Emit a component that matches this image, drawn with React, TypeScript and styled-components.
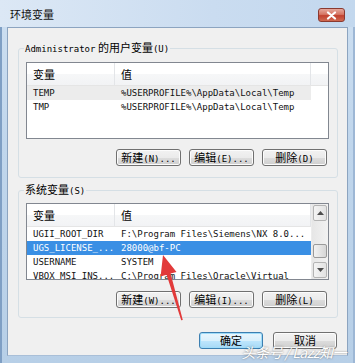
import styled, { createGlobalStyle } from "styled-components";

const GlobalStyle = createGlobalStyle`
  html, body {
    margin: 0;
    padding: 0;
    background: #fff;
  }
  body {
    font-family: "Noto Sans CJK SC", "Noto Sans", sans-serif;
    font-size: 11px;
    color: #000;
  }
`;

interface Variable {
  name: string;
  value: string;
  selected?: boolean;
  inactive?: boolean;
}

const userVars: Variable[] = [
  { name: "TEMP", value: "%USERPROFILE%\\AppData\\Local\\Temp", inactive: true },
  { name: "TMP", value: "%USERPROFILE%\\AppData\\Local\\Temp" },
];

const systemVars: Variable[] = [
  { name: "UGII_ROOT_DIR", value: "F:\\Program Files\\Siemens\\NX 8.0..." },
  { name: "UGS_LICENSE_...", value: "28000@bf-PC", selected: true },
  { name: "USERNAME", value: "SYSTEM" },
  { name: "VBOX_MSI_INS...", value: "C:\\Program Files\\Oracle\\Virtual" },
];

export default function App() {
  return <>
    <GlobalStyle />
    <Window>
      <TitleBar>
        <Title>环境变量</Title>
        <CloseButton aria-label="close">
          <svg width="11" height="9" viewBox="0 0 11 9">
            <path d="M2 1.5 L9 7.5 M9 1.5 L2 7.5" stroke="#fff" strokeWidth="2.2" strokeLinecap="round" />
          </svg>
        </CloseButton>
      </TitleBar>
      <Client>
        <Group>
          <Legend><Latin>Administrator</Latin> 的用户变量<Latin>(U)</Latin></Legend>
          <VarList vars={userVars} />
          <ButtonRow>
            <Button>新建<Latin>(N)...</Latin></Button>
            <Button>编辑<Latin>(E)...</Latin></Button>
            <Button>删除<Latin>(D)</Latin></Button>
          </ButtonRow>
        </Group>
        <Group $second>
          <Legend>系统变量<Latin>(S)</Latin></Legend>
          <VarList vars={systemVars} scroll />
          <ButtonRow $gap={11}>
            <Button>新建<Latin>(W)...</Latin></Button>
            <Button>编辑<Latin>(I)...</Latin></Button>
            <Button>删除<Latin>(L)</Latin></Button>
          </ButtonRow>
        </Group>
        <DialogButtons>
          <Button $default>确定</Button>
          <Button>取消</Button>
        </DialogButtons>
      </Client>
      <Annotation width="355" height="363" viewBox="0 0 355 363">
        <polygon
          points="163,255 176.5,272 170.6,273.6 182.8,320 181.2,320.3 166.6,274.8 160.6,276.5"
          fill="#e23a3a"
        />
      </Annotation>
      <Watermark>头条号 / Lazz知一</Watermark>
    </Window>
  </>;
}

interface VarListProps {
  vars: Variable[];
  scroll?: boolean;
}
function VarList(props: VarListProps) {
  return <ListBox>
    <ListBody>
      <Header>
        <HeaderCell>变量</HeaderCell>
        <HeaderCell>值</HeaderCell>
        <HeaderFill />
      </Header>
      {props.vars.map(v =>
        <Row key={v.name} $selected={v.selected} $inactive={v.inactive}>
          <Cell>{v.name}</Cell>
          <Cell>{v.value}</Cell>
        </Row>
      )}
    </ListBody>
    {props.scroll && <ScrollBar>
      <ScrollArrow>
        <svg width="7" height="4" viewBox="0 0 7 4"><path d="M0 4 L3.5 0 L7 4 Z" fill="#4d4d4d" /></svg>
      </ScrollArrow>
      <Track>
        <Thumb style={{ marginTop: 22 }} />
      </Track>
      <ScrollArrow>
        <svg width="7" height="4" viewBox="0 0 7 4"><path d="M0 0 L7 0 L3.5 4 Z" fill="#4d4d4d" /></svg>
      </ScrollArrow>
    </ScrollBar>}
  </ListBox>;
}

const Window = styled.div`
  position: relative;
  width: 355px;
  height: 363px;
  overflow: hidden;
  background: linear-gradient(to bottom, #cddff1 0%, #c0d6ec 40%, #b7cfe7 100%);
  box-shadow: inset 2px 0 0 #7f9fc4, inset -2px 0 0 #9db7d5;
  display: flex;
  flex-direction: column;
`;

const TitleBar = styled.div`
  height: 27px;
  display: flex;
  align-items: center;
  justify-content: space-between;
  padding: 0 10px;
  background: linear-gradient(to right, #dce8f5 0%, #cadcf0 60%, #c3d8ee 100%);
`;

const Title = styled.div`
  font-size: 11px;
  line-height: 14px;
  color: #111;
  margin-top: 1px;
`;

const CloseButton = styled.div`
  width: 27px;
  height: 14px;
  margin-top: 3px;
  border: 1px solid #8a3a30;
  border-radius: 3px;
  box-sizing: border-box;
  display: flex;
  align-items: center;
  justify-content: center;
  background: linear-gradient(to bottom, #e6a89c 0%, #d67664 45%, #c2412f 55%, #cf6a52 100%);
`;

const Client = styled.div`
  margin: 0 7px;
  height: 329px;
  box-sizing: border-box;
  border: 1px solid #8ca4c0;
  border-bottom-color: #a9bfd8;
  background: #f0f0f0;
  padding: 12px 9px 0 10px;
  display: flex;
  flex-direction: column;
`;

const Group = styled.fieldset<{ $second?: boolean }>`
  margin: ${p => p.$second ? "4px" : "0"} 0 0 0;
  padding: ${p => p.$second ? "5px 8px 9px 7px" : "6px 8px 11px 7px"};
  min-width: 0;
  border: 1px solid #d5dfe5;
  border-radius: 3px;
  display: flex;
  flex-direction: column;
`;

const Legend = styled.legend`
  padding: 0 1px;
  margin-left: -2px;
  font-size: 11px;
  line-height: 14px;
  color: #000;
`;

const Latin = styled.span`
  font-family: "DejaVu Sans Mono", "Liberation Mono", monospace;
  font-size: 9px;
`;

const ListBox = styled.div`
  height: 77px;
  box-sizing: border-box;
  border: 1px solid #828790;
  background: #fff;
  display: flex;
  overflow: hidden;
`;

const ListBody = styled.div`
  flex: 1;
  min-width: 0;
  overflow: hidden;
`;

const Header = styled.div`
  height: 22px;
  display: flex;
  border-bottom: 1px solid #e5e5e5;
  background: linear-gradient(to bottom, #ffffff 0%, #ffffff 50%, #f6f7f8 51%, #f2f3f5 100%);
`;

const HeaderCell = styled.div`
  box-sizing: border-box;
  padding-left: 6px;
  font-size: 11px;
  line-height: 22px;
  border-right: 1px solid #e3e5e8;
  &:first-child { width: 88px; }
  &:nth-child(2) { width: 196px; }
`;

const HeaderFill = styled.div`
  flex: 1;
`;

const Row = styled.div<{ $selected?: boolean; $inactive?: boolean }>`
  width: 284px;
  height: 14px;
  display: grid;
  grid-template-columns: 88px 196px;
  background: ${p => p.$selected ? "#3a8fe4" : p.$inactive ? "#ececec" : "transparent"};
  color: ${p => p.$selected ? "#fff" : "#111"};
`;

const Cell = styled.div`
  padding-left: 6px;
  font-family: "DejaVu Sans Mono", "Liberation Mono", monospace;
  font-size: 9px;
  line-height: 14px;
  white-space: nowrap;
  overflow: hidden;
`;

const ScrollBar = styled.div`
  width: 17px;
  display: flex;
  flex-direction: column;
  background: linear-gradient(to right, #e6e6e6, #f2f2f2);
  border-left: 1px solid #ececec;
  box-sizing: border-box;
`;

const ScrollArrow = styled.div`
  height: 16px;
  margin: 1px;
  border: 1px solid #b4b4b4;
  border-radius: 2px;
  box-sizing: border-box;
  display: flex;
  align-items: center;
  justify-content: center;
  background: linear-gradient(to right, #f4f4f4, #e2e2e2);
`;

const Track = styled.div`
  flex: 1;
  padding: 0 1px;
`;

const Thumb = styled.div`
  height: 14px;
  border: 1px solid #9a9a9a;
  border-radius: 2px;
  box-sizing: border-box;
  background: linear-gradient(to right, #f2f2f2, #d6d6d6);
`;

const ButtonRow = styled.div<{ $gap?: number }>`
  display: flex;
  justify-content: flex-end;
  gap: 8px;
  padding-right: 2px;
  margin-top: ${p => p.$gap ?? 10}px;
`;

const Button = styled.button<{ $default?: boolean }>`
  width: 65px;
  height: 17px;
  padding: 0;
  box-sizing: border-box;
  border: 1px solid ${p => p.$default ? "#3c7fb1" : "#707070"};
  border-radius: 3px;
  background: ${p => p.$default
    ? "linear-gradient(to bottom, #eaf6fd 0%, #d9f0fc 50%, #bee6fd 51%, #a7d9f5 100%)"
    : "linear-gradient(to bottom, #f2f2f2 0%, #ebebeb 50%, #dddddd 51%, #cfcfcf 100%)"};
  box-shadow: ${p => p.$default ? "inset 0 0 0 1px #9fdcf9" : "inset 0 0 0 1px #fcfcfc"};
  font-family: "Noto Sans CJK SC", sans-serif;
  font-size: 11px;
  line-height: 15px;
  color: #000;
  white-space: nowrap;
`;

const DialogButtons = styled.div`
  display: flex;
  justify-content: flex-end;
  gap: 10px;
  margin-top: 14px;
  padding-right: 1px;

  ${Button} { width: 64px; }
`;

const Annotation = styled.svg`
  position: absolute;
  left: 0;
  top: 0;
  pointer-events: none;
`;

const Watermark = styled.div`
  position: absolute;
  right: 9px;
  bottom: 1px;
  font-family: "Noto Sans CJK SC", sans-serif;
  font-size: 14px;
  font-style: italic;
  color: #fff;
  letter-spacing: -0.5px;
  text-shadow: 0 0 2px rgba(60, 60, 60, 0.7);
`;
